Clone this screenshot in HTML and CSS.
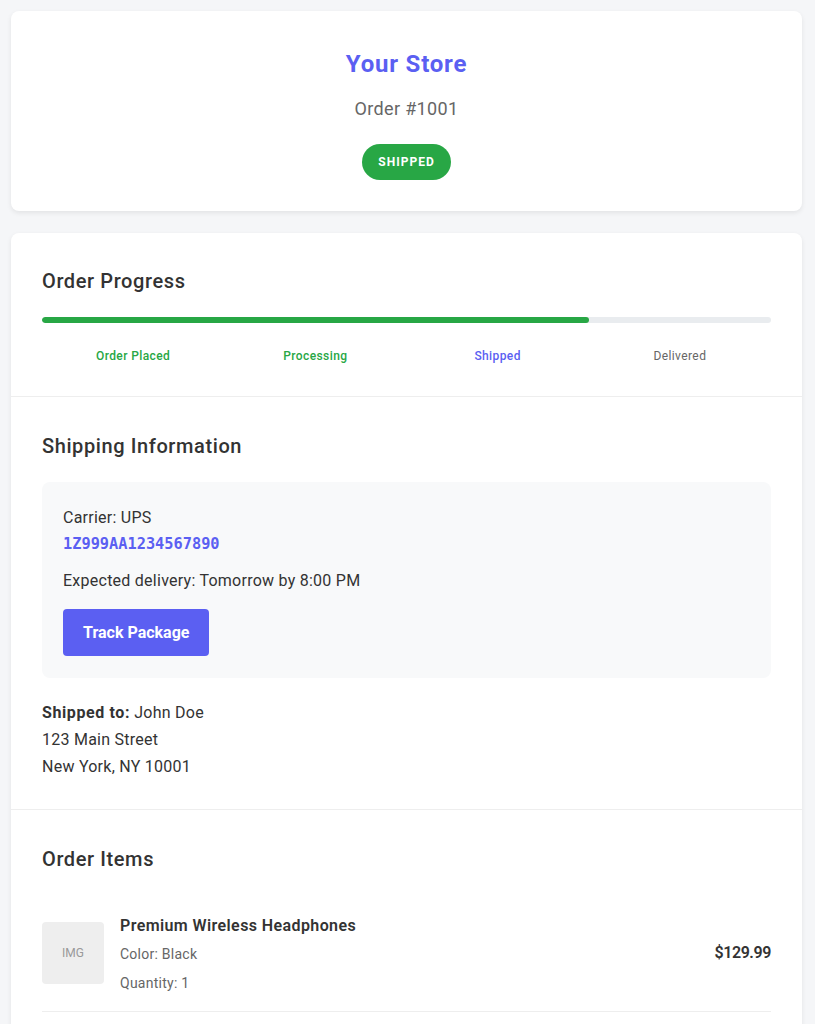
FILE: index.html
```html
<!DOCTYPE html>
<html lang="en">
<head>
<meta charset="utf-8">
<title>Order #1001</title>
<link rel="stylesheet" href="styles.css">
</head>
<body>
<div class="container">
  <header class="card header">
    <h1 class="store">Your Store</h1>
    <p class="order-no">Order #1001</p>
    <span class="badge">Shipped</span>
  </header>

  <main class="card">
    <section class="section section-progress">
      <h2 class="section-title">Order Progress</h2>
      <div class="progress"><div class="progress-fill" style="width:75%"></div></div>
      <div class="steps">
        <span class="step done">Order Placed</span>
        <span class="step done">Processing</span>
        <span class="step active">Shipped</span>
        <span class="step">Delivered</span>
      </div>
    </section>

    <section class="section section-shipping">
      <h2 class="section-title">Shipping Information</h2>
      <div class="ship-box">
        <div class="ship-line">Carrier: UPS</div>
        <div class="tracking">1Z999AA1234567890</div>
        <div class="ship-line eta">Expected delivery: Tomorrow by 8:00 PM</div>
        <a class="btn" href="#">Track Package</a>
      </div>
      <div class="address">
        <div><strong>Shipped to:</strong> John Doe</div>
        <div>123 Main Street</div>
        <div>New York, NY 10001</div>
      </div>
    </section>

    <section class="section section-items">
      <h2 class="section-title">Order Items</h2>
      <div class="item">
        <div class="thumb">IMG</div>
        <div class="item-info">
          <div class="item-name">Premium Wireless Headphones</div>
          <div class="item-meta">Color: Black</div>
          <div class="item-meta">Quantity: 1</div>
        </div>
        <div class="price">$129.99</div>
      </div>
    </section>
  </main>
</div>
</body>
</html>
```

FILE: styles.css
```css
* { box-sizing: border-box; }

body {
  margin: 0;
  background: #f5f6f8;
  font-family: "Segoe UI", Roboto, "Liberation Sans", sans-serif;
  color: #333;
  font-size: 16px;
  line-height: 1.6;
  letter-spacing: 0.25px;
}

.container {
  padding: 11px 13px 11px 11px;
  display: flex;
  flex-direction: column;
  gap: 22px;
}

.card {
  background: #fff;
  border-radius: 8px;
  box-shadow: 0 2px 5px rgba(0, 0, 0, 0.08);
}

.header {
  padding: 30px 30px 31px;
  display: flex;
  flex-direction: column;
  align-items: center;
  text-align: center;
}

.store {
  margin: 3px 0 10px;
  font-size: 24px;
  line-height: 40px;
  font-weight: 700;
  letter-spacing: 0.8px;
  color: #5b5ff2;
}

.order-no {
  margin: 1px 0 20px;
  font-size: 18px;
  line-height: 28.8px;
  letter-spacing: 0.35px;
  color: #666;
}

.badge {
  display: block;
  padding: 8px 16px;
  line-height: 20px;
  border-radius: 20px;
  background: #28a745;
  color: #fff;
  font-size: 12px;
  font-weight: 700;
  text-transform: uppercase;
  letter-spacing: 1px;
}

.section {
  padding: 31px 31px 30px;
  border-bottom: 1px solid #eee;
}

.section-progress { padding-top: 30px; }
.section-shipping { padding-bottom: 29px; }

.section-title {
  margin: 0 0 20px;
  padding-top: 2px;
  font-size: 20px;
  line-height: 32px;
  font-weight: 500;
  letter-spacing: 0.6px;
  color: #333;
}

.progress {
  height: 6px;
  background: #e9ecef;
  border-radius: 3px;
  overflow: hidden;
}

.progress-fill {
  height: 100%;
  background: #28a745;
  border-radius: 3px;
}

.steps {
  margin-top: 24px;
  display: grid;
  grid-template-columns: repeat(4, 1fr);
  text-align: center;
  font-size: 12px;
  line-height: 19.2px;
  letter-spacing: 0.4px;
  color: #666;
}

.step.done { color: #28a745; font-weight: 500; }
.step.active { color: #5b5ff2; font-weight: 500; }

.ship-box {
  background: #f8f9fa;
  border-radius: 8px;
  padding: 23px 21px 22px;
}

.ship-line { line-height: 25.6px; }

.tracking {
  margin-top: 1px;
  font-family: "DejaVu Sans Mono", "Liberation Mono", monospace;
  font-weight: 700;
  font-size: 15.3px;
  line-height: 25.6px;
  letter-spacing: 0;
  color: #5b5ff2;
}

.eta { margin: 11px 0 15px; }

.btn {
  display: inline-block;
  padding: 11px 20px;
  line-height: 25px;
  background: #5b5ff2;
  color: #fff;
  font-weight: 700;
  letter-spacing: 0;
  text-decoration: none;
  border-radius: 4px;
}

.address {
  margin-top: 21px;
  line-height: 27px;
}

.address strong { letter-spacing: 0.6px; }

.item {
  display: flex;
  align-items: center;
  gap: 16px;
  margin-top: -1px;
  padding: 15px 0 13px;
  border-bottom: 1px solid #eee;
}

.thumb {
  width: 62px;
  height: 62px;
  flex: none;
  background: #eee;
  border-radius: 4px;
  display: flex;
  align-items: center;
  justify-content: center;
  font-size: 12px;
  letter-spacing: 0;
  color: #999;
}

.item-info {
  flex: 1;
  padding-top: 2px;
  line-height: 29px;
}

.item-name {
  font-weight: 600;
  letter-spacing: 0.4px;
}

.item-meta {
  font-size: 14px;
  color: #666;
}

.price {
  font-weight: 600;
  letter-spacing: -0.4px;
}
```
